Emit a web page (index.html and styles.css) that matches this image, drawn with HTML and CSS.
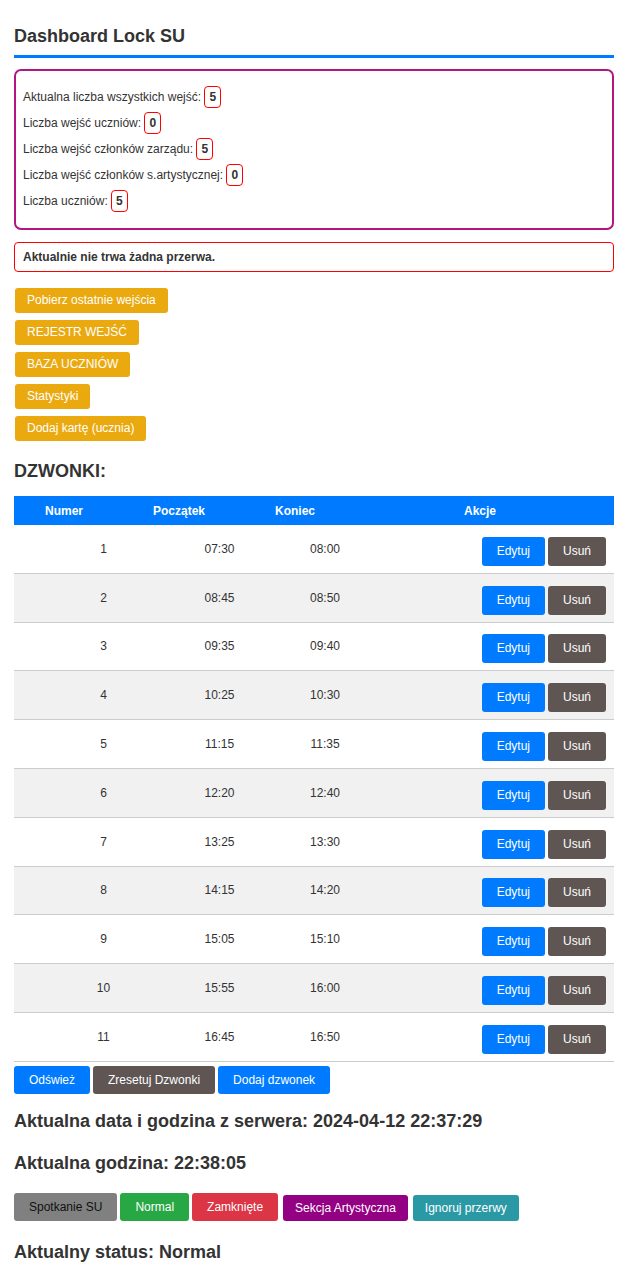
FILE: index.html
```html
<!DOCTYPE html>
<html lang="pl">
<head>
<meta charset="utf-8">
<title>Dashboard Lock SU</title>
<link rel="stylesheet" href="styles.css">
</head>
<body>
<div class="page">
  <h1 class="title">Dashboard Lock SU</h1>

  <div class="stats">
    <div class="stat">Aktualna liczba wszystkich wejść: <span class="badge">5</span></div>
    <div class="stat">Liczba wejść uczniów: <span class="badge">0</span></div>
    <div class="stat">Liczba wejść członków zarządu: <span class="badge">5</span></div>
    <div class="stat">Liczba wejść członków s.artystycznej: <span class="badge">0</span></div>
    <div class="stat">Liczba uczniów: <span class="badge">5</span></div>
  </div>

  <div class="alert">Aktualnie nie trwa żadna przerwa.</div>

  <div class="menu">
    <button class="btn-orange">Pobierz ostatnie wejścia</button>
    <button class="btn-orange">REJESTR WEJŚĆ</button>
    <button class="btn-orange">BAZA UCZNIÓW</button>
    <button class="btn-orange">Statystyki</button>
    <button class="btn-orange">Dodaj kartę (ucznia)</button>
  </div>

  <h2 class="section">DZWONKI:</h2>

  <div class="table">
    <div class="thead">
      <div class="th">Numer</div>
      <div class="th">Początek</div>
      <div class="th">Koniec</div>
      <div class="th">Akcje</div>
    </div>
    <div class="row"><div class="td">1</div><div class="td">07:30</div><div class="td">08:00</div><div class="td actions"><button class="btn btn-blue">Edytuj</button><button class="btn btn-dark">Usuń</button></div></div>
    <div class="row"><div class="td">2</div><div class="td">08:45</div><div class="td">08:50</div><div class="td actions"><button class="btn btn-blue">Edytuj</button><button class="btn btn-dark">Usuń</button></div></div>
    <div class="row"><div class="td">3</div><div class="td">09:35</div><div class="td">09:40</div><div class="td actions"><button class="btn btn-blue">Edytuj</button><button class="btn btn-dark">Usuń</button></div></div>
    <div class="row"><div class="td">4</div><div class="td">10:25</div><div class="td">10:30</div><div class="td actions"><button class="btn btn-blue">Edytuj</button><button class="btn btn-dark">Usuń</button></div></div>
    <div class="row"><div class="td">5</div><div class="td">11:15</div><div class="td">11:35</div><div class="td actions"><button class="btn btn-blue">Edytuj</button><button class="btn btn-dark">Usuń</button></div></div>
    <div class="row"><div class="td">6</div><div class="td">12:20</div><div class="td">12:40</div><div class="td actions"><button class="btn btn-blue">Edytuj</button><button class="btn btn-dark">Usuń</button></div></div>
    <div class="row"><div class="td">7</div><div class="td">13:25</div><div class="td">13:30</div><div class="td actions"><button class="btn btn-blue">Edytuj</button><button class="btn btn-dark">Usuń</button></div></div>
    <div class="row"><div class="td">8</div><div class="td">14:15</div><div class="td">14:20</div><div class="td actions"><button class="btn btn-blue">Edytuj</button><button class="btn btn-dark">Usuń</button></div></div>
    <div class="row"><div class="td">9</div><div class="td">15:05</div><div class="td">15:10</div><div class="td actions"><button class="btn btn-blue">Edytuj</button><button class="btn btn-dark">Usuń</button></div></div>
    <div class="row"><div class="td">10</div><div class="td">15:55</div><div class="td">16:00</div><div class="td actions"><button class="btn btn-blue">Edytuj</button><button class="btn btn-dark">Usuń</button></div></div>
    <div class="row"><div class="td">11</div><div class="td">16:45</div><div class="td">16:50</div><div class="td actions"><button class="btn btn-blue">Edytuj</button><button class="btn btn-dark">Usuń</button></div></div>
  </div>

  <div class="table-tools">
    <button class="btn btn-blue">Odśwież</button>
    <button class="btn btn-dark">Zresetuj Dzwonki</button>
    <button class="btn btn-blue">Dodaj dzwonek</button>
  </div>

  <h2 class="info">Aktualna data i godzina z serwera: 2024-04-12 22:37:29</h2>
  <h2 class="info info-time">Aktualna godzina: 22:38:05</h2>

  <div class="modes">
    <button class="mode mode-grey">Spotkanie SU</button>
    <button class="mode mode-green">Normal</button>
    <button class="mode mode-red">Zamknięte</button>
    <button class="mode mode-small mode-purple">Sekcja Artystyczna</button>
    <button class="mode mode-small mode-teal">Ignoruj przerwy</button>
  </div>

  <h2 class="info info-status">Aktualny status: Normal</h2>
</div>
</body>
</html>
```

FILE: styles.css
```css
html, body {
  margin: 0;
  padding: 0;
  background: #ffffff;
}

body {
  font-family: "Liberation Sans", Arial, sans-serif;
  font-size: 12px;
  line-height: 14px;
  color: #333333;
}

button {
  font-family: "Liberation Sans", Arial, sans-serif;
  font-size: 12px;
  line-height: 14px;
  border: none;
  color: #ffffff;
  cursor: pointer;
}

.page {
  width: 600px;
  margin-left: 14px;
  padding-bottom: 10px;
}

.title {
  margin: 26px 0 0;
  padding-bottom: 8px;
  font-size: 18px;
  line-height: 21px;
  font-weight: bold;
  color: #333333;
  border-bottom: 3px solid #007bff;
}

.stats {
  margin-top: 11px;
  border: 2px solid #b2167f;
  border-radius: 7px;
  padding: 15px 7px 16px;
}

.stat {
  height: 22px;
  line-height: 22px;
  margin-bottom: 4px;
}

.stat:last-child {
  margin-bottom: 0;
}

.badge {
  display: inline-block;
  border: 1px solid #ff0000;
  border-radius: 4px;
  padding: 3px 4px;
  line-height: 14px;
  font-weight: bold;
  vertical-align: top;
}

.alert {
  margin-top: 12px;
  border: 1px solid #ff0000;
  border-radius: 4px;
  padding: 7px 8px;
  font-weight: bold;
}

.menu {
  margin-top: 16px;
  display: flex;
  flex-direction: column;
  align-items: flex-start;
  gap: 7px;
  padding-left: 1px;
}

.btn-orange {
  background: #eaa90f;
  border-radius: 3px;
  padding: 5px 12px 6px;
}

.section {
  margin: 20px 0 0;
  font-size: 18px;
  line-height: 21px;
  font-weight: bold;
  color: #333333;
}

.table {
  margin-top: 14px;
}

.thead {
  display: grid;
  grid-template-columns: 100px 130px 102px 1fr;
  background: #007bff;
  color: #ffffff;
  font-weight: bold;
  height: 29px;
  align-items: center;
}

.th {
  text-align: center;
}

.row {
  display: grid;
  grid-template-columns: 179px 53px 158px 1fr;
  align-items: center;
  height: 47.8px;
  border-bottom: 1px solid #cccccc;
}

.row:nth-child(odd) {
  background: #f1f1f1;
}

.td {
  text-align: center;
}

.td.actions {
  display: flex;
  justify-content: flex-end;
  gap: 3px;
  padding-right: 8px;
  padding-top: 5px;
}

.btn {
  border-radius: 3px;
  padding: 7px 15px 8px;
}

.btn-blue {
  background: #007bff;
}

.btn-dark {
  background: #5f5654;
}

.table-tools {
  margin-top: 4px;
  display: flex;
  gap: 3px;
}

.table-tools .btn {
  padding: 7px 15px;
}

.info {
  margin: 17px 0 0;
  font-size: 18px;
  line-height: 21px;
  font-weight: bold;
  color: #333333;
}

.info-time {
  margin-top: 21px;
}

.modes {
  margin-top: 19px;
  display: flex;
  align-items: flex-end;
  gap: 3px;
}

.mode {
  border-radius: 3px;
  padding: 7px 15px;
}

.mode-small {
  padding: 6px 12px;
  margin-left: 2px;
}

.mode-grey {
  background: #808080;
  color: #111111;
}

.mode-green {
  background: #28a745;
}

.mode-red {
  background: #dc3545;
}

.mode-purple {
  background: #940083;
}

.mode-teal {
  background: #2b99a5;
}

.info-status {
  margin-top: 21px;
}
```
